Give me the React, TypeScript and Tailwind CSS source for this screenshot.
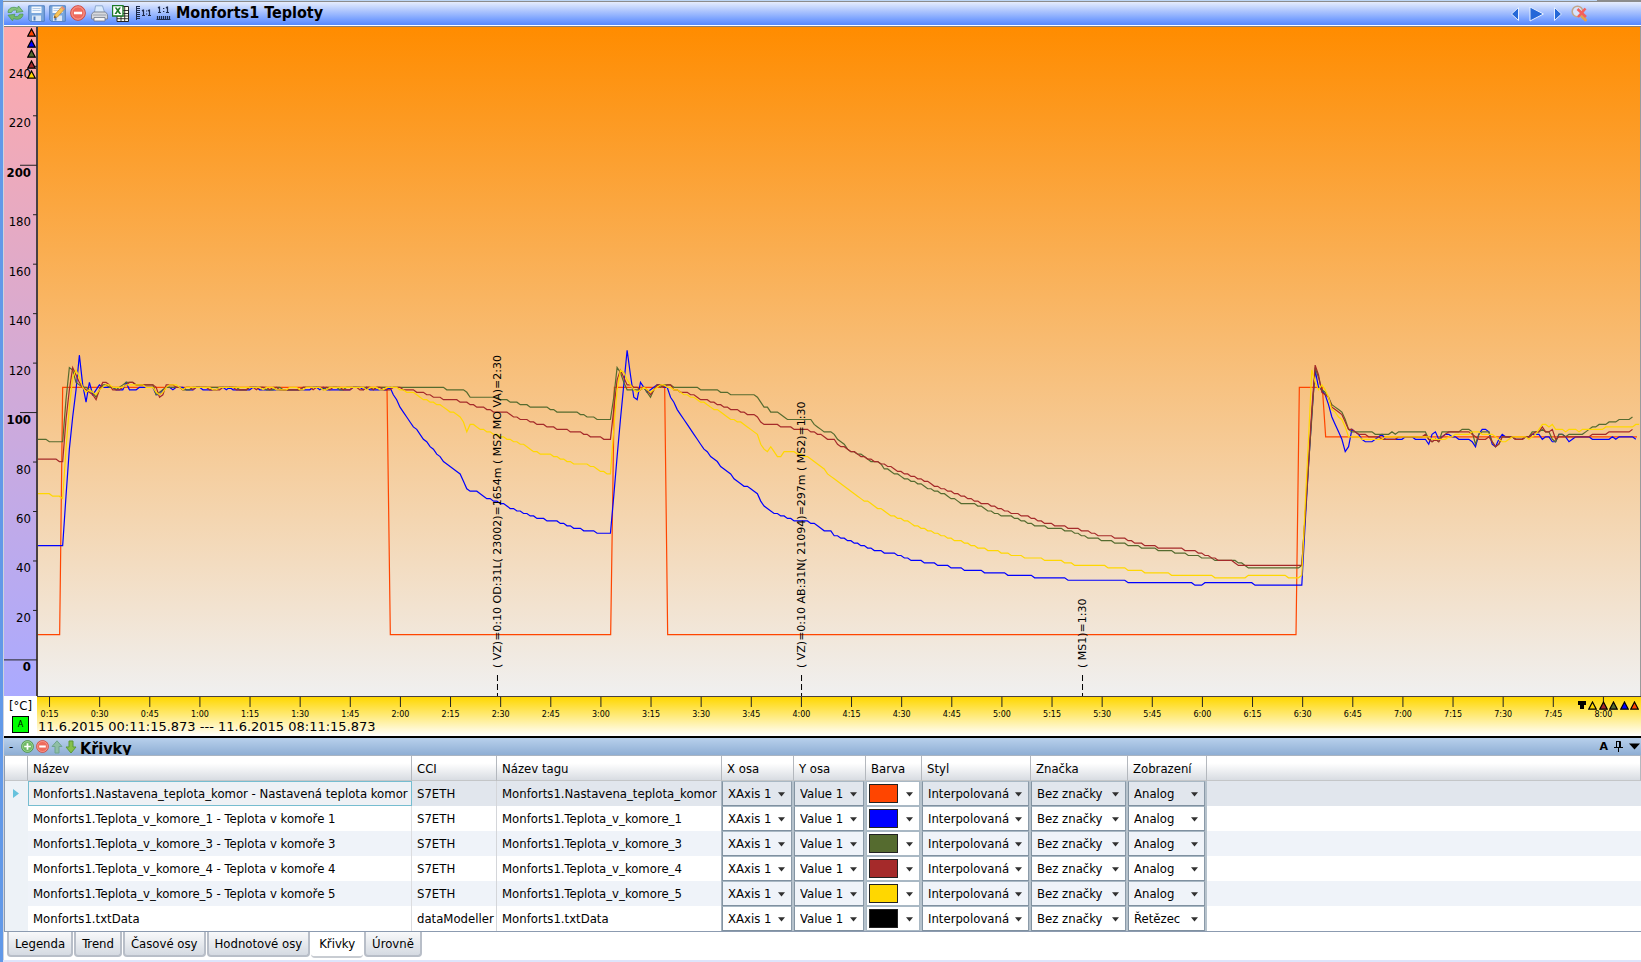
import React from 'react';

type Point = [number, number];

type Curve = {
  name: string;
  cci: string;
  tag: string;
  color: string;
  display: string;
};

const CURVES: Curve[] = [
  { name: 'Monforts1.Nastavena_teplota_komor - Nastavená teplota komor', cci: 'S7ETH', tag: 'Monforts1.Nastavena_teplota_komor', color: '#ff4500', display: 'Analog' },
  { name: 'Monforts1.Teplota_v_komore_1 - Teplota v komoře 1', cci: 'S7ETH', tag: 'Monforts1.Teplota_v_komore_1', color: '#0000ff', display: 'Analog' },
  { name: 'Monforts1.Teplota_v_komore_3 - Teplota v komoře 3', cci: 'S7ETH', tag: 'Monforts1.Teplota_v_komore_3', color: '#556b2f', display: 'Analog' },
  { name: 'Monforts1.Teplota_v_komore_4 - Teplota v komoře 4', cci: 'S7ETH', tag: 'Monforts1.Teplota_v_komore_4', color: '#a52a2a', display: 'Analog' },
  { name: 'Monforts1.Teplota_v_komore_5 - Teplota v komoře 5', cci: 'S7ETH', tag: 'Monforts1.Teplota_v_komore_5', color: '#ffd700', display: 'Analog' },
  { name: 'Monforts1.txtData', cci: 'dataModeller', tag: 'Monforts1.txtData', color: '#000000', display: 'Řetězec' },
];

const TABS = ['Legenda', 'Trend', 'Časové osy', 'Hodnotové osy', 'Křivky', 'Úrovně'];

// Time runs in ticks, one sample each SAMPLE ticks
const T_START = 114;
const T_END = 4920;
const SAMPLE = 10.02;
const FIRST_SAMPLE = 117.86;
const V_TOP = 255.7;
const V_BOTTOM = -14.8;

function part(offset: number, text: string): Point[] {
  return text.split(' ').map((pair) => {
    const [t, v] = pair.split(',').map(Number);
    return [t + offset, v];
  });
}

const SETPOINT = part(0, '112,10 179,10 188,110 1161,110 1171,10 1832,10 1843,110 1994,110 2003,10 3888,10 3898,110 3967,110 3977,90 4911,90');

const CHAMBER_1: Point[] = [
  ...part(0, '112,46 188,46 198,66 208,85 218,98 228,109 238,123 248,111 258,104 268,112 278,107 288,109 298,111 308,110 328,110 345,109 365,109 378,112 388,109 410,109 425,110 460,110 470,107 480,107 490,109 500,110 520,109 535,110 560,109 582,109 600,110 612,109 650,109 660,110 670,110 680,109 690,110 702,109 750,109 765,110 780,109 930,109 940,110 955,109 970,110 982,109 1045,109 1060,110 1070,110 1085,109 1098,110 1108,109 1155,109 1165,110 1172,111 1182,107 1192,105 1202,102 1240,94'),
  ...part(1140, '112,93 130,89 192,80 240,75 262,69 272,68 290,68 310,66 345,64 380,62 410,60 440,59 475,57 525,56 580,53 620,52 660,51 692,51 702,66 712,82 722,97 732,111 742,125 752,115 762,106 772,105 782,112 792,110 802,108 815,109 832,111 850,110 863,110 875,106 890,101 960,87 992,82 1012,80 1022,78 1090,70 1102,70 1135,67 1145,64 1155,62 1180,59'),
  ...part(2340, '0,58 35,57 45,56 75,56 95,55 115,54 135,52 150,52 165,50 200,48 235,47 285,44 330,43 400,40 440,39 520,37 570,36 640,35 700,34 800,33 900,32 1035,32 1045,31 1235,31 1245,30 1260,30 1266,31'),
  ...part(3720, '38,31 47,30 188,30 198,55 208,78 218,99 228,117 238,110 248,109 258,107 268,103 278,98 308,89 318,84 328,86 338,93 350,92 375,88 392,88 410,89 425,91 440,89 490,89 500,90 520,90 530,89 560,89 568,87 578,91 588,92 598,89 610,90 620,91 640,90 660,89 690,89 700,88 709,86 720,91 728,93 740,93 750,92 760,87 770,86 778,89 790,91 800,90 840,89 870,90 885,91 900,91 910,89 920,90 930,90 940,88 950,88 960,91 972,90 980,88 992,88 1010,90 1050,90 1060,89 1110,89 1120,90 1128,89 1140,90 1180,90 1190,89'),
];

const CHAMBER_3: Point[] = [
  ...part(0, '112,89 140,89 148,88 188,88 198,105 208,118 218,117 228,112 238,111 248,110 270,109 285,106 298,109 310,111 330,110 345,109 362,110 378,112 400,112 410,111 460,111 470,107 480,108 490,109 500,110 535,110 545,109 570,109 585,110 700,110 715,109 735,109 745,110 780,110 795,109 820,109 840,110 850,109 900,109 920,110 950,110 970,109 990,110 1030,109 1050,110 1100,110 1120,109 1140,110'),
  ...part(1140, '22,110 192,110 200,109 250,109 262,108 272,106 335,106 370,105 400,104 430,103 450,102 500,102 510,101 540,100 590,100 600,99 625,98 660,97 692,97 702,106 712,118 722,116 732,112 745,109 782,109 792,110 802,108 812,106 822,109 832,111 845,110 863,111 875,111 885,110 950,110 960,109 1010,109 1020,108 1040,108 1050,107 1120,107 1130,106 1145,104 1155,102 1165,102 1172,100 1195,100'),
  ...part(2340, '0,99 22,97 95,97 105,95 130,92 150,92 215,84 235,83 250,82 275,80 290,80 315,77 330,76 370,73 400,72 430,70 500,66 545,63 580,63 640,59 710,57 740,55 810,53 870,52 905,50 970,48 1050,46 1090,45 1150,44 1200,43 1270,41 1310,40 1360,40 1385,39'),
  ...part(3720, '10,39 28,37 180,37 188,38 198,58 208,78 218,98 228,118 238,114 247,109 262,106 278,103 308,100 318,97 328,93 338,92 400,92 410,91 450,91 460,92 468,91 478,92 560,92 568,89 578,88 588,89 598,88 608,92 660,92 668,93 690,93 700,92 709,87 720,91 728,92 750,92 760,88 770,86 780,87 790,90 810,90 840,89 870,90 880,92 900,92 908,93 920,92 930,92 940,89 950,88 960,91 970,91 980,90 1000,91 1025,91 1035,92 1050,93 1075,95 1100,95 1110,96 1130,96 1140,97 1170,97 1180,98'),
];

const CHAMBER_4: Point[] = [
  ...part(0, '112,81 170,81 178,80 188,80 198,97 208,109 218,118 228,115 238,112 248,110 268,108 278,107 288,105 298,109 308,112 325,111 338,109 360,109 368,110 378,111 388,112 400,112 410,111 450,111 465,110 478,106 490,107 500,111 520,111 530,110 545,109 555,110 575,109 590,110 620,110 632,109 655,109 665,110 700,110 710,109 740,109 760,110 770,109 790,110 805,109 820,110 840,109 900,109 915,110 940,109 952,110 975,110 985,109 1010,110 1030,109 1050,109 1060,110 1085,109 1095,110 1115,109 1130,110 1150,109 1165,109 1175,110 1200,110'),
  ...part(1140, '70,109 100,109 110,108 130,108 140,107 165,106 200,105 230,105 240,104 260,104 275,103 300,102 330,101 345,100 385,100 400,98 430,97 450,96 480,95 510,94 535,93 555,93 570,92 600,92 610,91 630,90 660,90 670,89 692,89 702,101 712,113 722,117 732,114 742,111 762,110 782,109 792,110 802,109 812,107 822,109 832,111 845,111 855,110 863,111 875,111 885,109 900,108 920,108 960,105 1000,104 1035,102 1060,101 1110,99 1135,98 1145,96 1155,95 1190,95'),
  ...part(2340, '0,94 35,94 45,93 85,93 95,92 120,91 145,89 160,89 175,87 205,85 215,84 235,83 285,80 310,79 340,77 370,75 440,72 460,70 540,66 600,63 640,62 690,59 735,58 770,56 830,54 910,52 950,50 980,50 1000,49 1030,49 1060,47 1100,46 1150,45 1195,45 1210,44 1240,44 1275,42 1320,40 1350,40 1380,38'),
  ...part(3720, '0,38 188,38 198,58 208,80 218,101 228,119 238,115 247,108 262,106 278,102 308,99 318,96 328,93 345,92 358,91 370,91 388,90 410,90 430,89 465,89 480,90 550,90 560,91 570,89 578,88 588,89 598,88 610,90 625,92 690,92 700,91 709,90 718,89 740,89 750,90 760,88 770,86 780,87 790,90 810,90 840,89 870,90 885,92 900,92 908,94 920,92 930,92 940,93 950,89 960,90 1050,90 1060,91 1100,91 1110,92 1170,92 1180,93'),
];

const CHAMBER_5: Point[] = [
  ...part(0, '112,67 150,67 158,66 180,66 188,65 198,85 208,102 218,114 228,117 238,114 248,110 258,108 268,109 278,108 288,107 298,109 308,110 318,111 335,110 370,110 380,111 430,111 440,110 460,110 470,108 480,107 490,108 500,110 520,111 535,110 545,109 560,110 600,110 620,110 645,109 660,110 750,110 770,110 790,109 800,110 850,109 880,110 900,109 935,110 950,110 965,109 1000,110 1050,110 1080,110 1100,109 1115,110 1150,109 1170,110'),
  ...part(1140, '40,110 60,109 70,109 80,108 105,108 120,106 150,104 180,103 210,100 225,100 240,98 250,96 262,92 272,95 290,94 345,91 400,88 430,87 460,84 490,83 530,82 580,79 610,79 650,77 682,75 692,75 702,93 712,109 722,117 732,116 742,113 752,111 762,109 775,108 785,109 795,110 810,108 820,109 840,111 865,110 880,109 900,108 930,106 950,105 990,102 1030,99 1050,97 1090,95 1110,93 1135,91 1145,87 1155,85 1163,84 1173,86 1193,82 1203,82'),
  ...part(2340, '5,82 15,84 38,84 50,83 75,82 95,81 120,78 140,75 250,64 265,64 335,58 365,57 400,54 425,53 520,48 545,48 570,46 630,44 670,43 740,41 830,40 890,38 940,38 1000,37 1075,36 1100,35 1160,35 1170,34 1285,34 1300,33 1350,33 1357,32 1367,33'),
  ...part(3720, '20,33 28,34 138,34 148,33 180,33 188,34 198,62 208,89 218,117 228,112 238,109 247,111 262,106 278,101 308,97 318,94 328,90 350,90 380,89 430,89 440,90 560,90 575,89 620,89 650,91 680,91 720,92 728,91 760,91 775,89 790,88 800,88 815,90 860,90 868,89 885,91 908,95 930,94 940,95 950,93 970,93 980,92 1000,93 1020,92 1035,93 1090,93 1100,94 1180,94 1198,95'),
];

// Whole-degree readings on the sampling grid
function sampled(points: Point[]): Point[] {
  const slots: Point[] = points.map(([t, v]) => [Math.round((t - FIRST_SAMPLE) / SAMPLE), v]);
  const out: Point[] = [[T_START, points[0][1]]];
  for (let i = 1; i < slots.length; i++) {
    const [a, va] = slots[i - 1];
    const [b, vb] = slots[i];
    for (let k = a + 1; k <= b; k++) {
      out.push([FIRST_SAMPLE + k * SAMPLE, Math.round(va + ((vb - va) * (k - a)) / (b - a))]);
    }
  }
  return out;
}

function toPath(points: Point[]) {
  return points
    .map(([t, v]) => `${(((t - T_START) / (T_END - T_START)) * 1000).toFixed(2)},${(((V_TOP - v) / (V_TOP - V_BOTTOM)) * 1000).toFixed(2)}`)
    .join(' ');
}

const LINES = [
  { color: '#ff4500', points: toPath(SETPOINT) },
  { color: '#0000ff', points: toPath(sampled(CHAMBER_1)) },
  { color: '#556b2f', points: toPath(sampled(CHAMBER_3)) },
  { color: '#a52a2a', points: toPath(sampled(CHAMBER_4)) },
  { color: '#ffd700', points: toPath(sampled(CHAMBER_5)) },
];

const MARKS = [
  { left: 28.65, text: '( VZ)=0:10 OD:31L( 23002)=1654m ( MS2 MO VA)=2:30' },
  { left: 47.63, text: '( VZ)=0:10 AB:31N( 21094)=297m ( MS2)=1:30' },
  { left: 65.17, text: '( MS1)=1:30' },
];

const valueY = (v: number) => `${((V_TOP - v) / (V_TOP - V_BOTTOM)) * 100}%`;

function Triangle({ color }: { color: string }) {
  return (
    <svg width="9" height="9" viewBox="0 0 9 9" className="shrink-0">
      <path d="M4.5 1 8.3 8.2H.7Z" fill={color} stroke="#000" strokeWidth="1.2" />
    </svg>
  );
}

function RefreshIcon() {
  return (
    <svg width="17" height="17" viewBox="0 0 17 17">
      <path d="M1 7.500C1 3 6 1 10.500 3.200l1-2.200 4.500 5.500-7 1 1-2C7.500 4.500 5.500 5 4.500 7.500Z" fill="#86c47f" stroke="#4f9a55" strokeWidth=".8" />
      <path d="M16 9c0 4.500-5 6.500-9.500 4.500l-1 2.300L1 10.200l7-1-1 2c2.500 1 4.500 .5 5.500-2Z" fill="#74b96c" stroke="#4f9a55" strokeWidth=".8" />
    </svg>
  );
}

function SaveIcon({ edit = false }: { edit?: boolean }) {
  return (
    <svg width="17" height="17" viewBox="0 0 17 17">
      <path d="M.7 .8h15.600v15.500H2.200L.7 14.800Z" fill="#7aa7dc" stroke="#4f7fc0" />
      <path d="M3.500 1.500h10V8h-10Z" fill="#f4f8fd" />
      <path d="M4.500 3.500h8M4.500 5.500h8" stroke="#b5cce8" />
      <path d="M4 10.500h9v5.500H4Z" fill="#dbe7f5" />
      <path d="M5.500 11.500h2v4h-2Z" fill="#4f7fc0" />
      {edit && (
        <>
          <path d="M5 13 6 9.500 13 1.500l2.500 2.300L8.500 12Z" fill="#f7c456" stroke="#c98a2b" strokeWidth=".7" />
          <path d="M12 2.700 13.200 1.200l2.500 2.300-1.200 1.400Z" fill="#e88c7d" />
          <path d="M5 13 5.600 10.800l1.800 1.500Z" fill="#6b4a23" />
        </>
      )}
    </svg>
  );
}

function RoundIcon({ plus = false, size = 15 }: { plus?: boolean; size?: number }) {
  return (
    <svg width={size} height={size} viewBox="0 0 15 15">
      <circle cx="7.500" cy="7.500" r="6.900" fill={plus ? '#6fb865' : '#ee6a5c'} stroke={plus ? '#4b9145' : '#cf4a40'} strokeWidth=".9" />
      <circle cx="7.500" cy="7.500" r="5.800" fill="none" stroke={plus ? '#a8dba0' : '#f8a79c'} strokeWidth=".8" />
      <path d={plus ? 'M3.700 6.500h2.800V3.700h2v2.800h2.800v2H8.500v2.800h-2V8.500H3.700Z' : 'M3.700 6.300h7.600v2.400H3.700Z'} fill="#fff" />
    </svg>
  );
}

function PrintIcon() {
  return (
    <svg width="17" height="17" viewBox="0 0 17 17">
      <path d="M4.500 .8h7l2 6.500h-10Z" fill="#dcebfc" stroke="#7d9cc4" strokeWidth=".8" />
      <path d="M2.500 7h12l2 2.500v4.500H.5V9.500Z" fill="#d7d9de" stroke="#747a86" strokeWidth=".8" />
      <path d="M3 12.500h11v3.500H3Z" fill="#f5f6f8" stroke="#747a86" strokeWidth=".8" />
      <path d="M1.500 10h14" stroke="#9aa0ab" />
    </svg>
  );
}

function ExcelIcon() {
  return (
    <svg width="17" height="17" viewBox="0 0 17 17">
      <path d="M5 1.500h11.500v15H5Z" fill="#fffff0" stroke="#222" />
      <path d="M5 5.500h11.500M5 8.500h11.500M5 11h11.500M5 13.700h11.500M9 1.500v15M12.700 1.500v15" stroke="#222" strokeWidth=".9" />
      <path d="M.5 .5h10.500v10.500H.5Z" fill="#fff" stroke="#1d7a28" strokeWidth="1.400" />
      <path d="M2.700 2.500h2L5.800 4.300 7 2.500h2L6.900 5.600 9.200 9h-2L5.800 7 4.500 9h-2l2.300-3.400Z" fill="#1d7a28" />
    </svg>
  );
}

function ScaleIcon({ horizontal = false }: { horizontal?: boolean }) {
  return horizontal ? (
    <svg width="15" height="16" viewBox="0 0 15 16">
      <path d="M.5 14.500h14M1.500 11v3M3.500 11v3M5.500 11v3M7.500 11v3M9.500 11v3M11.500 11v3M13.500 11v3" stroke="#1d2a4a" strokeWidth="1.200" />
      <path d="M3.500 1.500v6M2 3l1.500-1.200M11.500 1.500v6M10 3l1.500-1.200M2 7.500h3M10 7.500h3M7 3.500h1.300M7 6.500h1.300" stroke="#1d2a4a" strokeWidth="1.200" fill="none" />
    </svg>
  ) : (
    <svg width="17" height="16" viewBox="0 0 17 16">
      <path d="M1.500 1v14M2 1.500h3M2 3.500h3M2 5.500h3M2 7.500h3M2 9.500h3M2 11.500h3M2 13.500h3" stroke="#1d2a4a" strokeWidth="1" />
      <path d="M8.500 4.500v6M7 6l1.500-1.200M14.500 4.500v6M13 6l1.500-1.200M7 10.500h3M13 10.500h3M11 6h1.200M11 9h1.200" stroke="#1d2a4a" strokeWidth="1.200" fill="none" />
    </svg>
  );
}

function ZoomOffIcon() {
  return (
    <svg width="17" height="17" viewBox="0 0 17 17">
      <circle cx="6.500" cy="6.500" r="5.300" fill="#d7e3fb" stroke="#c2a78c" strokeWidth="1.600" />
      <path d="m11 11.500 3.500 3.500" stroke="#dfa552" strokeWidth="3" strokeLinecap="round" />
      <path d="m6.500 4 8.500 8M14.500 3.500 7 12" stroke="#f4605c" strokeWidth="2.600" />
    </svg>
  );
}

function ArrowIcon({ up = false }: { up?: boolean }) {
  return (
    <svg width="12" height="14" viewBox="0 0 12 14">
      <path
        d={up ? 'M6 .8 11 6.500H8v6.500H4V6.500H1Z' : 'M6 13 11 7H8V1H4v6H1Z'}
        fill={up ? '#8fbfa5' : '#86c04a'}
        stroke={up ? '#6fa58c' : '#5a9a35'}
      />
    </svg>
  );
}

function NavArrow({ path, width }: { path: string; width: number }) {
  return (
    <svg width={width} height="16" viewBox={`0 0 ${width} 16`}>
      <path d={path} fill="#2468d8" stroke="#e4eeff" strokeWidth="1" />
    </svg>
  );
}

function Toolbar() {
  const tools = [
    { label: 'Obnovit', icon: <RefreshIcon /> },
    { label: 'Uložit', icon: <SaveIcon /> },
    { label: 'Uložit jako', icon: <SaveIcon edit /> },
    { label: 'Odstranit', icon: <RoundIcon size={16} /> },
    { label: 'Tisk', icon: <PrintIcon /> },
    { label: 'Export do Excelu', icon: <ExcelIcon /> },
  ];
  return (
    <header className="flex h-6 shrink-0 items-center border-b border-white bg-linear-to-b/srgb from-[#e6edfd] to-[#5588ff] pl-[3px]">
      <div className="flex">
        {tools.map((t) => (
          <button key={t.label} aria-label={t.label} className="flex w-[21px] justify-start">
            {t.icon}
          </button>
        ))}
        <button aria-label="Měřítko Y 1:1" className="ml-[2px] flex w-[21px]"><ScaleIcon /></button>
        <button aria-label="Měřítko X 1:1" className="flex w-5"><ScaleIcon horizontal /></button>
      </div>
      <h1 className="pb-px font-['DejaVu_Sans_Condensed','DejaVu_Sans',sans-serif] text-[16px] leading-5 font-bold">Monforts1 Teploty</h1>
      <div className="ml-auto flex items-center pr-[53px]">
        <button aria-label="Zpět" className="mr-2"><NavArrow width={10} path="M8.500 1.500v13L1.500 8Z" /></button>
        <button aria-label="Přehrát" className="mr-2"><NavArrow width={17} path="M2 1v14l13.500-7Z" /></button>
        <button aria-label="Vpřed" className="mr-2"><NavArrow width={10} path="M1.500 1.500v13L8.500 8Z" /></button>
        <button aria-label="Zrušit lupu"><ZoomOffIcon /></button>
      </div>
    </header>
  );
}

function ValueAxis() {
  const ticks = [240, 220, 200, 180, 160, 140, 120, 100, 80, 60, 40, 20, 0];
  return (
    <div className="relative w-[34px] shrink-0 border-r-2 border-[#484040] bg-linear-to-b/srgb from-[#ffaaaa] to-[#aaaaff] font-['DejaVu_Sans_Condensed','DejaVu_Sans',sans-serif]">
      <svg className="absolute inset-0 h-full w-full overflow-visible">
        {ticks.map((v) => {
          const major = v % 100 === 0;
          return (
            <svg key={v} y={valueY(v)} className="overflow-visible">
              <path d={`M${v === 0 ? 0 : major ? 16 : 29} .5H33`} stroke="#222" />
              <text x="27" y="12" textAnchor="end" className={major ? 'text-[13px] font-bold' : 'text-[13px]'}>
                {v}
              </text>
            </svg>
          );
        })}
      </svg>
      <div className="absolute top-px right-0 flex h-[51px] flex-col justify-between">
        {LINES.map((l) => <Triangle key={l.color} color={l.color} />)}
      </div>
    </div>
  );
}

function Plot() {
  return (
    <div className="relative min-w-0 flex-1 border-r border-[#9a9a9a] bg-linear-to-b/srgb from-[#ff8c00] to-[#f0f0f0]">
      <svg className="absolute inset-0 h-full w-full" viewBox="0 0 1000 1000" preserveAspectRatio="none">
        {LINES.map((l) => (
          <polyline key={l.color} points={l.points} fill="none" stroke={l.color} strokeWidth="1.2" vectorEffect="non-scaling-stroke" />
        ))}
      </svg>
      <svg className="absolute inset-0 h-full w-full overflow-visible">
        {MARKS.map((m) => (
          <svg key={m.text} x={`${m.left}%`} y="100%" className="overflow-visible">
            <path d="M.5-21V0" stroke="#000" strokeDasharray="6 3" />
            <text transform="translate(4 -28) rotate(-90)" className="text-[11px]">{m.text}</text>
          </svg>
        ))}
      </svg>
    </div>
  );
}

function TimeAxis() {
  const ticks = Array.from({ length: 32 }, (_, i) => (i + 1) * 15);
  return (
    <div className="relative min-w-0 flex-1 bg-linear-to-b/srgb from-[#ffd700] to-white">
      <svg className="absolute inset-0 h-full w-full">
        {ticks.map((m) => (
          <svg key={m} x={`${((m - 11.25) / 480) * 100}%`} className="overflow-visible">
            <path d="M0 0V10" stroke="#222" />
            <text x="0" y="20" textAnchor="middle" className="text-[8px]">
              {`${Math.floor(m / 60)}:${String(m % 60).padStart(2, '0')}`}
            </text>
          </svg>
        ))}
      </svg>
      <p className="absolute bottom-px left-px text-[13px] leading-4">
        11.6.2015 00:11:15.873 --- 11.6.2015 08:11:15.873
      </p>
      <div className="absolute top-1 right-[2px] flex gap-[2px]">
        <svg width="8" height="8" viewBox="0 0 8 8">
          <path d="M0 0h8v4H6v4H2V4H0Z" />
        </svg>
        <div className="flex w-[51px] justify-between">
          {[...LINES].reverse().map((l) => <Triangle key={l.color} color={l.color} />)}
        </div>
      </div>
    </div>
  );
}

function PanelHeader() {
  return (
    <div className="flex h-[18px] shrink-0 items-center overflow-hidden border-b border-[#a9b4c2] bg-linear-to-b/srgb from-[#b8d0ec] to-[#8eaed4] pl-[5px]">
      <button aria-label="Sbalit" className="w-3 text-left text-[12px] leading-4">-</button>
      <button aria-label="Přidat" className="w-[15px]"><RoundIcon plus size={13} /></button>
      <button aria-label="Odebrat" className="w-[15px]"><RoundIcon size={13} /></button>
      <button aria-label="Nahoru" className="w-[14px]"><ArrowIcon up /></button>
      <button aria-label="Dolů" className="w-[15px]"><ArrowIcon /></button>
      <h2 className="mt-1 font-['DejaVu_Sans_Condensed','DejaVu_Sans',sans-serif] text-[16px] leading-5 font-bold">Křivky</h2>
      <div className="ml-auto flex items-center gap-[6px] pr-px">
        <button aria-label="Automaticky" className="text-[11px] leading-4 font-bold">A</button>
        <button aria-label="Připnout">
          <svg width="9" height="11" viewBox="0 0 9 11">
            <path d="M2.500 .5v5.500M2 .5h4.500M0 6.500h9M4.500 7v4" stroke="#000" fill="none" />
            <path d="M6 .5V6" stroke="#000" strokeWidth="2" />
          </svg>
        </button>
        <button aria-label="Nabídka">
          <svg width="11" height="7" viewBox="0 0 11 7"><path d="M0 .5h11L5.500 6.500Z" /></svg>
        </button>
      </div>
    </div>
  );
}

function Chevron() {
  return (
    <svg width="7" height="5" viewBox="0 0 7 5" className="pointer-events-none absolute top-[10px] right-[6px]">
      <path d="M0 .3h7L3.500 4.500Z" fill="#303030" />
    </svg>
  );
}

function PickCell({ label, options }: { label: string; options: string[] }) {
  return (
    <td className="border-r-2 border-[#b6c2cc] p-0">
      <div className="relative h-[25px] border border-t-[#a9b8c4] border-r-[#8b9aa8] border-b-[#7f90a0] border-l-[#8494a2]">
        <select aria-label={label} className="block h-full w-full appearance-none bg-transparent pl-[5px] leading-5 outline-none">
          {options.map((o) => <option key={o}>{o}</option>)}
        </select>
        <Chevron />
      </div>
    </td>
  );
}

const COLUMNS = [
  { title: '', width: 'w-[23px]' },
  { title: 'Název', width: 'w-[384px]' },
  { title: 'CCI', width: 'w-[85px]' },
  { title: 'Název tagu', width: 'w-[225px]' },
  { title: 'X osa', width: 'w-[72px]' },
  { title: 'Y osa', width: 'w-[72px]' },
  { title: 'Barva', width: 'w-[56px]' },
  { title: 'Styl', width: 'w-[109px]' },
  { title: 'Značka', width: 'w-[97px]' },
  { title: 'Zobrazení', width: 'w-[79px]' },
  { title: '', width: '' },
];

function CurveTable() {
  return (
    <table className="w-full table-fixed border-separate border-spacing-0 border-b border-l border-[#8c9bb0] bg-white text-[13px] leading-5 whitespace-nowrap">
      <thead>
        <tr className="h-[25px]">
          {COLUMNS.map((c, i) => (
            <th key={i} className={`${c.width} border-r border-b border-r-[#b4b8be] border-b-[#c4c6c8] bg-linear-to-b/srgb from-white from-30% to-[#d8dce2] p-0 pt-px pl-[5px] text-left font-normal`}>
              {c.title}
            </th>
          ))}
        </tr>
      </thead>
      <tbody>
        {CURVES.map((c, i) => {
          const selected = i === 0;
          const tone = selected ? 'bg-[#e1e6ed]' : i % 2 === 0 ? 'bg-[#eff3f9]' : 'bg-white';
          return (
            <tr key={c.tag} className={`h-[25px] ${tone}`}>
              <td className="bg-[#edf2f7] p-0 pl-2">
                {selected && (
                  <svg width="6" height="9" viewBox="0 0 6 9"><path d="M0 0v9l6-4.500Z" fill="#66c2dd" /></svg>
                )}
              </td>
              <td className={selected ? 'border border-[#76bdd0] bg-[#eef1f5] p-0 pl-1' : 'border-r border-[#dcdde0] p-0 pl-[5px]'}>{c.name}</td>
              <td className="border-r border-[#d4d6da] p-0 pl-[5px]">{c.cci}</td>
              <td className="border-r border-[#a9b4c0] p-0 pl-[5px]">{c.tag}</td>
              <PickCell label={`X osa ${c.tag}`} options={['XAxis 1']} />
              <PickCell label={`Y osa ${c.tag}`} options={['Value 1']} />
              <td className="border-r-2 border-[#b6c2cc] p-0">
                <button aria-label={`Barva ${c.tag}`} className="relative flex h-[25px] w-full items-center border border-[#a9b8c4] bg-white pl-[2px]">
                  <span className="h-[19px] w-[29px] border border-[#222]" style={{ backgroundColor: c.color }} />
                  <Chevron />
                </button>
              </td>
              <PickCell label={`Styl ${c.tag}`} options={['Interpolovaná']} />
              <PickCell label={`Značka ${c.tag}`} options={['Bez značky']} />
              <PickCell label={`Zobrazení ${c.tag}`} options={[c.display]} />
              <td className="p-0" />
            </tr>
          );
        })}
      </tbody>
    </table>
  );
}

function TabBar() {
  return (
    <div role="tablist" className="flex h-[28px] shrink-0 items-start gap-px bg-white pl-[3px] text-[13px] leading-5">
      {TABS.map((t) => (
        <button
          key={t}
          role="tab"
          aria-selected={t === 'Křivky'}
          className={
            t === 'Křivky'
              ? 'h-[26px] rounded-b-sm border-b-2 border-[#c8ccd2] bg-white px-2'
              : 'h-[25px] rounded-b-sm border-x-2 border-b-2 border-[#b8bec8] bg-linear-to-b/srgb from-[#f8f9fa] to-[#d5dae2] px-[6px] pt-px'
          }
        >
          {t}
        </button>
      ))}
    </div>
  );
}

export default function App() {
  return (
    <div className="flex h-screen min-h-[600px] w-full flex-col overflow-hidden border-l-[3px] border-[#6299e8] bg-white font-['DejaVu_Sans',Verdana,sans-serif] text-black">
      <div className="flex h-[2px] shrink-0 justify-end border-b border-[#8c8c8c] bg-[#bcd6f5]">
        <span className="w-11 bg-[#8c8c8c]" />
      </div>
      <div className="flex min-h-0 flex-1 flex-col border-l border-[#d0d4dc]">
        <Toolbar />
        <main className="flex min-h-0 flex-1 border-t border-[#85807a]">
          <ValueAxis />
          <Plot />
        </main>
        <div className="flex h-[42px] shrink-0 border-b-2 border-black">
          <div className="flex w-[33px] shrink-0 flex-col items-center bg-white pt-px font-['DejaVu_Sans_Condensed','DejaVu_Sans',sans-serif]">
            <span className="text-[13px] leading-[18px]">[°C]</span>
            <button className="mt-px h-[17px] w-[17px] border border-black bg-[#00ff00] text-[9px] leading-[15px]">A</button>
          </div>
          <div className="flex min-w-0 flex-1 border-t border-[#484040]">
            <TimeAxis />
          </div>
        </div>
        <PanelHeader />
        <section className="shrink-0 font-['DejaVu_Sans_Condensed','DejaVu_Sans',sans-serif]">
          <CurveTable />
          <TabBar />
        </section>
      </div>
      <div className="h-[2px] shrink-0 bg-[#dde5fb]" />
    </div>
  );
}
